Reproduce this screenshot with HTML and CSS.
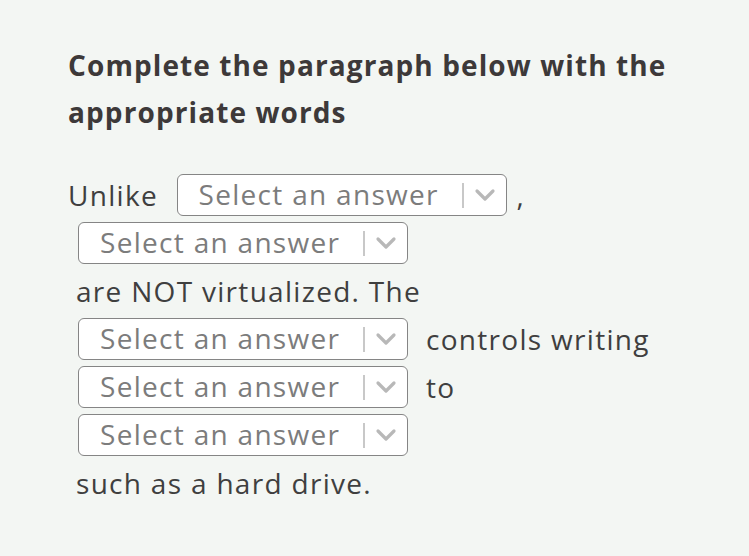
FILE: index.html
```html
<!DOCTYPE html>
<html>
<head>
<meta charset="utf-8">
<link rel="stylesheet" href="styles.css">
</head>
<body>
<div class="card">
  <h2 class="title">Complete the paragraph below with the appropriate words</h2>
  <div class="para"><span class="chunk first">Unlike</span> <span class="sel"><span class="ph">Select an answer</span><span class="bar"></span><svg class="chev" viewBox="0 0 22 14" width="22" height="14"><polyline points="3,3 11,11 19,3" fill="none" stroke="#b8b8b8" stroke-width="3.2" stroke-linecap="round" stroke-linejoin="round"/></svg></span><span class="chunk comma">,</span><wbr><span class="sel"><span class="ph">Select an answer</span><span class="bar"></span><svg class="chev" viewBox="0 0 22 14" width="22" height="14"><polyline points="3,3 11,11 19,3" fill="none" stroke="#b8b8b8" stroke-width="3.2" stroke-linecap="round" stroke-linejoin="round"/></svg></span><wbr><span class="chunk">are NOT virtualized. The</span><wbr><span class="sel"><span class="ph">Select an answer</span><span class="bar"></span><svg class="chev" viewBox="0 0 22 14" width="22" height="14"><polyline points="3,3 11,11 19,3" fill="none" stroke="#b8b8b8" stroke-width="3.2" stroke-linecap="round" stroke-linejoin="round"/></svg></span><wbr><span class="chunk">controls writing</span><wbr><span class="sel"><span class="ph">Select an answer</span><span class="bar"></span><svg class="chev" viewBox="0 0 22 14" width="22" height="14"><polyline points="3,3 11,11 19,3" fill="none" stroke="#b8b8b8" stroke-width="3.2" stroke-linecap="round" stroke-linejoin="round"/></svg></span><wbr><span class="chunk">to</span><wbr><span class="sel"><span class="ph">Select an answer</span><span class="bar"></span><svg class="chev" viewBox="0 0 22 14" width="22" height="14"><polyline points="3,3 11,11 19,3" fill="none" stroke="#b8b8b8" stroke-width="3.2" stroke-linecap="round" stroke-linejoin="round"/></svg></span><wbr><span class="chunk">such as a hard drive.</span></div>
</div>
</body>
</html>
```
FILE: styles.css
```css
html, body {
  margin: 0;
  padding: 0;
  background: #f3f6f3;
}
body {
  width: 749px;
  height: 556px;
  overflow: hidden;
}
.card {
  padding: 42px 0 0 68px;
  width: 612px;
  font-family: "Open Sans", "Noto Sans", sans-serif;
}
.title {
  margin: 0 0 35px 0;
  font-size: 28px;
  font-weight: 700;
  line-height: 47px;
  letter-spacing: 1.1px;
  color: #3d3939;
}
.para {
  font-size: 28px;
  line-height: 48px;
  color: #3f3f3f;
  letter-spacing: 1.3px;
}
.chunk {
  display: inline-block;
  white-space: nowrap;
  margin-left: 8px;
  vertical-align: top;
  height: 48px;
}
.chunk.first {
  margin-left: 0;
}
.chunk.comma {
  margin-left: 0;
  margin-right: 10px;
}
.sel {
  display: inline-flex;
  align-items: center;
  box-sizing: border-box;
  width: 330px;
  height: 42px;
  margin: 3px 10px;
  padding: 0 10px 0 21px;
  border: 1.6px solid #858585;
  border-radius: 6px;
  background: #ffffff;
  vertical-align: top;
}
.ph {
  flex: 1;
  color: #7c7c7c;
  font-size: 28px;
  line-height: 40px;
  white-space: nowrap;
  margin-top: -2px;
}
.bar {
  width: 2px;
  height: 25px;
  background: #c8c8c8;
  margin-right: 10px;
}
.chev {
  display: block;
}
```
